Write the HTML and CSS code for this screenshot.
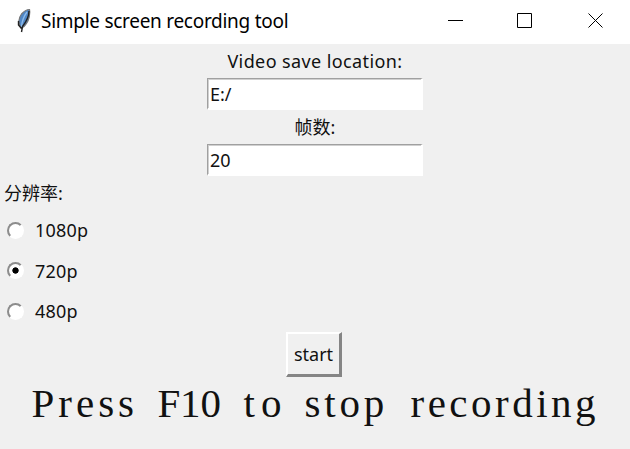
FILE: index.html
```html
<!DOCTYPE html>
<html lang="en">
<head>
<meta charset="utf-8">
<title>Simple screen recording tool</title>
<link rel="stylesheet" href="styles.css">
</head>
<body>
<header class="titlebar">
  <svg class="feather" width="16" height="26" viewBox="0 0 16 26">
    <path d="M4.500 20C.5 16 1.500 10 4.500 6C7 3 10 1.500 12.500 1.500C13.500 5 12 12 9.500 15.500C8 18 6.500 19.500 4.500 20Z" fill="#4f86c6" stroke="#777" stroke-width="1.200"/>
    <path d="M10 4C7 8 5 13 4.500 19" fill="none" stroke="#8dbbea" stroke-width="1.300"/>
    <path d="M12 3C12 8 9 14 5.500 18.500L4.500 24M1.500 13V17L4.500 20.500" fill="none" stroke="#222" stroke-width="1.400"/>
  </svg>
  <h1 class="title">Simple screen recording tool</h1>
  <div class="controls">
    <svg width="15" height="15" viewBox="0 0 15 15"><path d="M0 7.500H15"/></svg>
    <svg width="15" height="15" viewBox="0 0 15 15"><path d="M.5 .5H14.500V14.500H.5Z"/></svg>
    <svg class="close" width="15" height="15" viewBox="0 0 15 15"><path d="M.5 .5L14.500 14.500M14.500 .5L.5 14.500"/></svg>
  </div>
</header>
<main class="content">
  <label class="label label-location" for="location">Video save location:</label>
  <input class="entry" id="location" value="E:/">
  <label class="label" for="frames">帧数:</label>
  <input class="entry" id="frames" value="20">
  <div class="label label-left">分辨率:</div>
  <div class="options">
    <label class="option"><input class="radio" type="radio" name="res"><span>1080p</span></label>
    <label class="option"><input class="radio" type="radio" name="res" checked><span>720p</span></label>
    <label class="option"><input class="radio" type="radio" name="res"><span>480p</span></label>
  </div>
  <button class="start">start</button>
  <p class="hint">
    <span class="word-press">Press</span>
    <span class="word-key">F10</span>
    <span class="word-to">to</span>
    <span class="word-stop">stop</span>
    <span class="word-recording">recording</span>
  </p>
</main>
</body>
</html>
```
FILE: styles.css
```css
* { box-sizing: border-box; }
body {
  margin: 0;
  width: 630px;
  height: 449px;
  overflow: hidden;
  background: #f0f0f0;
  color: #111;
  font: 18px/24px "Noto Sans", "Noto Sans CJK SC", sans-serif;
}
.titlebar {
  display: flex;
  align-items: center;
  height: 44px;
  padding: 0 27px 2px 17px;
  background: #fff;
  color: #000;
}
.feather { margin-right: 8px; }
.title {
  margin: 0;
  font-size: 19px;
  font-weight: 400;
  letter-spacing: -0.280px;
  white-space: nowrap;
}
.controls { display: flex; gap: 54px; margin: 0 0 2px auto; }
.controls path { fill: none; stroke: #000; stroke-width: 1; }
.controls .close { margin-left: 2px; }
.content { display: flex; flex-direction: column; align-items: center; }
.label { height: 34px; line-height: 34px; }
.label-location { letter-spacing: 0.4px; }
.label-left { align-self: flex-start; padding-left: 4px; }
.entry {
  width: 216px;
  height: 32px;
  padding: 0 0 0 2px;
  border: solid;
  border-color: #a0a0a0 #fff #fff #a0a0a0;
  border-width: 1px 2px 2px 1px;
  box-shadow: inset 1px 1px #d0d0d0;
  background: #fff;
  color: #111;
  font: inherit;
  outline: 0;
}
.options { align-self: flex-start; padding-left: 7px; }
.option {
  display: flex;
  align-items: center;
  gap: 10px;
  height: 40.500px;
  letter-spacing: 0.200px;
}
.radio {
  appearance: none;
  width: 17px;
  height: 17px;
  margin: 0 1px 0 0;
  border: 2px solid;
  border-color: #8c8c8c #fff #fff #8c8c8c;
  border-radius: 50%;
  background: #fff;
}
.radio:checked { background: radial-gradient(circle, #000 0 2.800px, #fff 3.500px); }
.start {
  width: 56px;
  height: 45px;
  margin-right: 2px;
  padding: 0;
  border: solid;
  border-width: 2px 3px 3px 2px;
  border-color: #fff #858585 #858585 #fff;
  background: #f0f0f0;
  color: #111;
  font: inherit;
}
.hint {
  display: grid;
  grid-template-columns: 126px 84px 63px 105px 189px;
  margin: 2px 0 0;
  font: 41px/48px "Liberation Serif", serif;
  white-space: nowrap;
}
.word-press { letter-spacing: 4px; }
.word-key { letter-spacing: -0.200px; }
.word-to { padding-left: 2px; letter-spacing: 6px; }
.word-stop { letter-spacing: 3.800px; }
.word-recording { padding-left: 1px; letter-spacing: 3.500px; }
```
